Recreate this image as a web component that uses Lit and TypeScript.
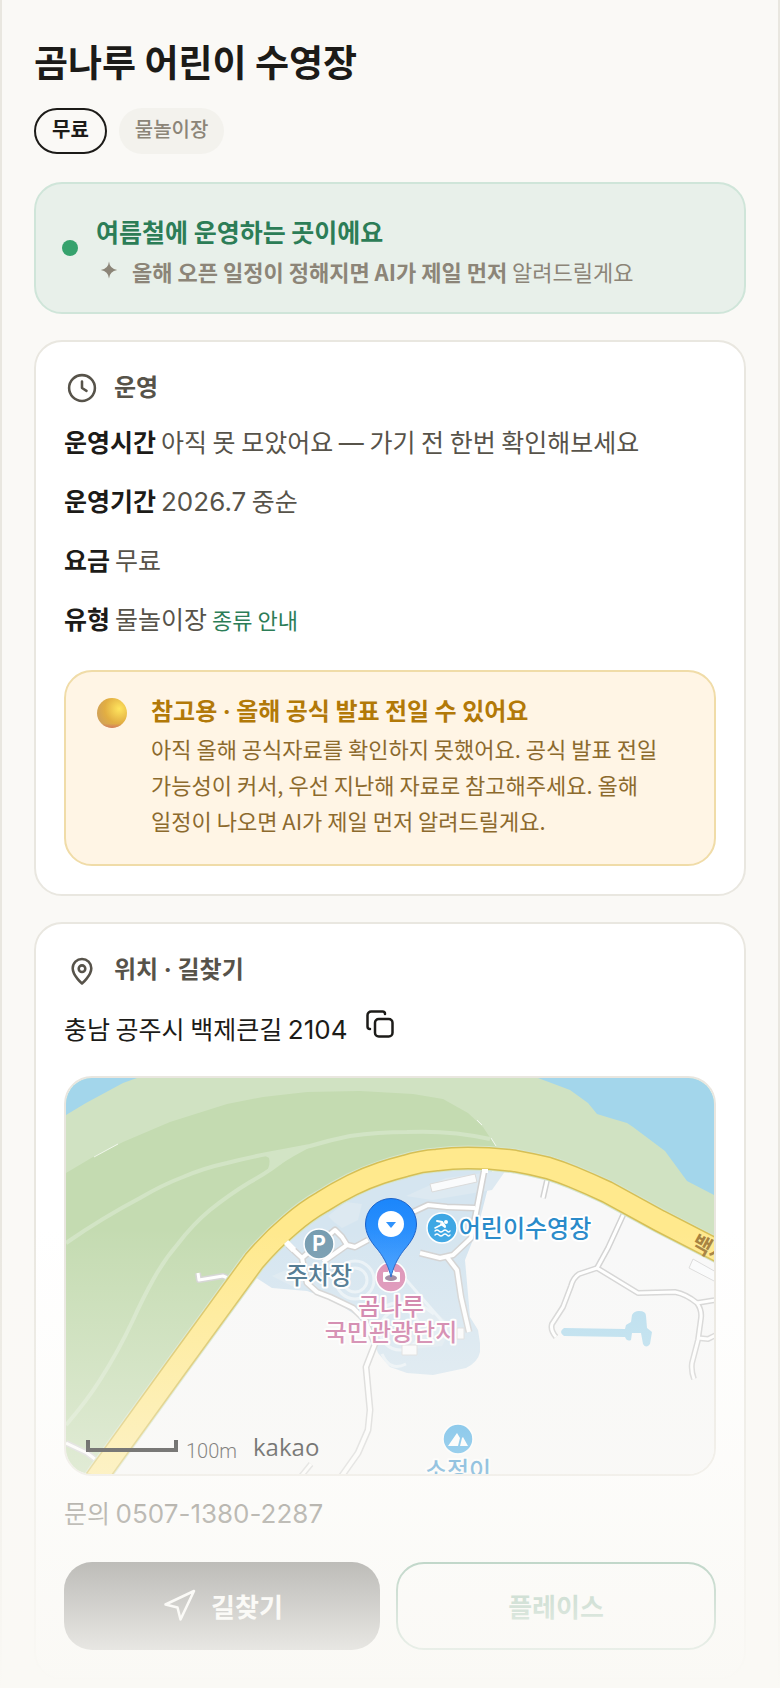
import { LitElement, html, css, svg } from "lit";
import { customElement } from "lit/decorators.js";

const outlineIcon = (body: unknown) => svg`
  <svg class="icon" viewBox="0 0 24 24" fill="none" stroke="currentColor" stroke-width="1.7"
    stroke-linecap="round" stroke-linejoin="round" aria-hidden="true">${body}</svg>`;

const clockIcon = outlineIcon(svg`<circle cx="12" cy="12" r="8.6"/><path d="M12 7.6V12l3 1.9"/>`);
const pinIcon = outlineIcon(svg`
  <path d="M12 21s-6.2-5.3-6.2-10.2a6.2 6.2 0 0 1 12.4 0C18.2 15.7 12 21 12 21z"/>
  <circle cx="12" cy="11.1" r="2.2"/>`);
const navigateIcon = outlineIcon(svg`<path d="M3 11 22 2l-9 19-2-8z"/>`);

@customElement("place-map")
class PlaceMap extends LitElement {
  static styles = css`
    :host {
      display: block;
      overflow: hidden;
      border: 2px solid #e9e6df;
      border-radius: 28px;
    }
    svg {
      display: block;
      width: 100%;
      height: auto;
    }
    .lane-edge,
    .lane {
      fill: none;
      stroke-linejoin: round;
    }
    .lane-edge {
      stroke: #d2d2d2;
      stroke-width: 7;
    }
    .lane {
      stroke: #fff;
      stroke-width: 4;
    }
    .thin .lane-edge {
      stroke-width: 6;
    }
    .thin .lane {
      stroke-width: 3;
    }
    .trail {
      fill: none;
      stroke: #d2e4c5;
      stroke-width: 4;
    }
    .label {
      font: 500 24px "Noto Sans CJK KR", sans-serif;
      text-anchor: middle;
      paint-order: stroke;
      stroke: #fff;
      stroke-width: 4px;
      stroke-linejoin: round;
    }
    .slate { fill: #45708a; }
    .blue { fill: #2a8bca; }
    .pink { fill: #cc74a2; }
    .road-name {
      font: 700 21px "Noto Sans CJK KR", sans-serif;
      fill: #a5803c;
    }
    .parking {
      font: 700 21px "Inter", sans-serif;
      fill: #fff;
      text-anchor: middle;
    }
    .scale {
      font: 300 20px "Roboto", sans-serif;
      fill: #111;
    }
    .brand {
      font: 500 24px "Open Sans", sans-serif;
      fill: #000;
    }
  `;

  private lanes(paths: string[]) {
    return svg`
      ${paths.map((d) => svg`<path class="lane-edge" d=${d}/>`)}
      ${paths.map((d) => svg`<path class="lane" d=${d}/>`)}`;
  }

  render() {
    const road =
      "M20 415L34 395L110 290L188 183Q205 163 224 147Q240 133 256 124Q270 115 286 107Q300 100 315 95Q327 91 339 88Q355 83 371 82Q386 80 402 80Q426 80 449 83Q466 86 482 90Q495 94 507 99Q524 106 541 114L594 143L670 182";
    return html`
      <svg viewBox="0 0 648 396" role="img" aria-label="곰나루 어린이 수영장 지도">
        <defs>
          <linearGradient id="marker" x1="0" y1="0" x2="0" y2="1">
            <stop offset="0" stop-color="#1b86fb"/>
            <stop offset="1" stop-color="#3d9bff"/>
          </linearGradient>
        </defs>
        <rect width="648" height="396" fill="#f8f8f8"/>
        <path fill="#d0e2c2" d="M0 0H648V172L594 143L541 114L507 99L482 90L449 83L402 80L371 82L339 88L315 95L286 107L256 124L224 147L188 183L110 290L34 396H0z"/>
        <path fill="#c4dbb1" d="M0 95L27 79L57 64L104 44L161 26L197 19L241 14L294 13L347 16L377 21L402 35L417 49L431 70V80L371 82L339 88L286 107L256 124L224 147L188 183L110 290L34 396H0z"/>
        <path fill="none" stroke="#fff" stroke-width="1" d="M28 79l24-13M411 42l5 5M425 60l5 8" opacity=".7"/>
        <path class="trail" d="M0 165Q36 140 74 120Q96 107 117 99Q138 90 161 85Q180 80 201 76Q222 72 244 68Q264 62 284 58Q312 54 341 54Q384 52 424 61"/>
        <path class="trail" d="M0 347Q20 324 34 302Q52 274 67 242Q77 220 87 202Q98 182 111 167Q127 146 144 132Q164 116 184 104Q206 92 222 78"/>
        <path fill="#d2e4c5" d="M196 76L250 66L228 78L200 95Q205 86 203 80z"/>
        <path fill="#a3d6eb" d="M0 0H71L57 5L20 25L0 37z"/>
        <path fill="#a3d6eb" d="M472 0L504 12L522 25L531 36L544 40L561 45L567 49L599 73L621 103L648 117V0z"/>

        <path fill="#d5e5f0" d="M189 199L206 210L241 213L267 222L297 242L309 267L312 275L324 289L341 295L367 297L400 290Q412 284 414 274V265L412 252L404 239L399 182L412 149L427 90L402 80L339 88L286 107L224 147z"/>
        <g fill="#dde9f1">
          <path d="M262 138l18-14 16 2-4 16-16 8-8-6zM340 118l40-18 60-8-14 20-60 10zM206 198l14-6 18 12-8 6zM356 222l30 26-10 20-40 4z"/>
        </g>
        <g fill="none" stroke="#eaf2f7" stroke-width="3">
          <circle cx="289" cy="202" r="19"/>
          <circle cx="289" cy="202" r="12"/>
          <circle cx="334" cy="252" r="20"/>
          <path d="M312 232q30-18 56 4M330 190l52 60M316 276q8 18 24 10"/>
        </g>
        <g fill="#fafbfc" stroke="#dadada">
          <path d="M364 106L409 96L411 104L366 114zM336 267h15v10h-15zM391 250h7v11h-7zM627 181L650 194V204L623 190z"/>
        </g>

        ${this.lanes([
          "M222 167L236 180L241 205L251 214L264 219L287 230L299 242L309 266L300 289L304 332L302 352L292 375L275 399",
          "M236 180L269 152L276 159L281 167L289 169L302 162",
          "M281 167L257 184",
          "M347 134L362 127L381 129L409 130",
          "M419 88L411 130L405 160L387 177L374 180L354 175",
          "M381 179L391 192L395 219L403 254",
        ])}
        <g class="thin">
          ${this.lanes([
            "M482 98L477 120",
            "M559 133L542 170L531 190L572 215L609 214Q620 216 631 225Q636 232 635 240L632 262L626 285Q625 293 628 301",
            "M531 190L513 196Q507 200 505 208L497 229L486 246Q484 252 490 259",
            "M631 225L650 222",
            "M632 260L642 261L650 257",
            "M132 195L133 202L157 198L164 201",
            "M0 365L21 375L34 385",
            "M245 386L232 402",
          ])}
        </g>

        <path fill="none" stroke="#d5e5cb" stroke-width="25" d=${road}/>
        <path fill="none" stroke="#d6bf55" stroke-width="23" d=${road}/>
        <path fill="none" stroke="#ffe98d" stroke-width="20" d=${road}/>
        <path fill="none" stroke="#fff" stroke-width="6" d="M220 164l8 8M419 91v4"/>
        <text class="road-name" transform="translate(624 169) rotate(29)">백제큰길</text>

        <path fill="#b4dcee" d="M498 250L559 251L560 247L565 244L566 237Q568 233 573 233Q580 233 580 238L581 250L586 254L584 266Q580 271 577 266L575 255L566 255L565 262Q561 264 559 259L498 258Q492 254 498 250z"/>

        <g stroke="#fff" stroke-width="1.5">
          <circle cx="253" cy="166" r="15" fill="#769cb0"/>
          <circle cx="376" cy="150" r="15" fill="#3ea7e4"/>
          <circle cx="325" cy="199" r="15" fill="#dc8fb5"/>
          <circle cx="392" cy="361" r="15" fill="#3ea7e4"/>
        </g>
        <text class="parking" x="253" y="173">P</text>
        <g fill="none" stroke="#fff" stroke-linecap="round">
          <path d="M371 143l5 1 3 4M375 146l4 3" stroke-width="2"/>
          <path d="M369 150l6-3" stroke-width="1.600"/>
          <path d="M369 153q2-2 4 0t4 0t4 0t3 0M369 157q2-2 4 0t4 0t4 0t3 0" stroke-width="1.400"/>
        </g>
        <circle cx="380" cy="144" r="2" fill="#fff"/>
        <path fill="#fff" d="M382 368L391 355L394 360L392 368zM394 368L396 360L397 359L402 368z"/>
        <path fill="#fff" d="M318 194h4l1-2h5l1 2h4q1 0 1 1v8q0 1-1 1h-15q-1 0-1-1v-8q0-1 1-1z"/>

        <text class="label slate" x="253" y="206">주차장</text>
        <text class="label blue" x="459" y="159">어린이수영장</text>
        <text class="label pink" x="325" y="237">곰나루</text>
        <text class="label pink" x="325" y="263">국민관광단지</text>
        <text class="label blue" x="392" y="401">소정이</text>

        <ellipse cx="325" cy="200" rx="6" ry="3" fill="#6d4a72" opacity=".7"/>
        <path fill="url(#marker)" stroke="#1c62c8" stroke-width="1"
          d="M325 199C323 190 319 181 312 172C304 163 299.500 155 299.500 146A25.500 25.500 0 0 1 350.500 146C350.500 155 346 163 338 172C331 181 327 190 325 199z"/>
        <circle cx="325" cy="146" r="13" fill="#fff"/>
        <path fill="#2f92fc" d="M320 144h10l-5 6z"/>

        <path fill="none" stroke="#000" stroke-width="4" d="M22 362V372H110V362"/>
        <text class="scale" x="120" y="380">100m</text>
        <text class="brand" x="187" y="378">kakao</text>
      </svg>
    `;
  }
}

@customElement("app-root")
class AppRoot extends LitElement {
  static styles = css`
    :host {
      display: block;
      font-family: "Noto Sans CJK KR", sans-serif;
      color: #1c1b18;
      word-break: keep-all;
    }
    .page {
      position: relative;
      box-sizing: border-box;
      min-height: 100vh;
      padding: 35px 32px 8px;
      border: solid #e9e7e0;
      border-width: 0 2px;
      background: #faf9f6;
    }
    .page::after {
      content: "";
      position: absolute;
      inset: auto -2px 0;
      height: 460px;
      background: linear-gradient(rgba(250, 249, 245, 0), #faf9f5);
      pointer-events: none;
    }
    h1,
    h2,
    p,
    dl,
    dd {
      margin: 0;
    }
    h1 {
      font-size: 37px;
      line-height: 52px;
      font-weight: 700;
    }
    .chips {
      display: flex;
      gap: 12px;
      margin: 21px 0 28px;
    }
    .chip {
      padding: 6px 16px 10px;
      border-radius: 23px;
      background: #f3f2ed;
      color: #8c8578;
      font-size: 20px;
      line-height: 30px;
      font-weight: 500;
    }
    .chip.selected {
      padding: 4px 16px 8px;
      border: 2px solid #1c1b18;
      background: none;
      color: #1c1b18;
      font-weight: 700;
    }
    .status {
      display: flex;
      align-items: center;
      gap: 18px;
      padding: 24px 26px;
      border: 2px solid #cfe5d9;
      border-radius: 28px;
      background: #e8f0ea;
    }
    .dot {
      flex: none;
      width: 16px;
      height: 16px;
      border-radius: 50%;
      background: #36a26d;
    }
    .status-title {
      color: #2c7d57;
      font-size: 25px;
      line-height: 46px;
      font-weight: 700;
    }
    .status-note {
      display: flex;
      gap: 12px;
      color: #8c8578;
      font-size: 22px;
      line-height: 34px;
    }
    .spark {
      flex: none;
      width: 24px;
      height: 28px;
      margin-top: 2px;
    }
    .card {
      margin-top: 26px;
      padding: 28px;
      border: 2px solid #e9e7e0;
      border-radius: 28px;
      background: #fff;
    }
    .heading {
      display: flex;
      align-items: center;
      gap: 14px;
      color: #57534a;
      font-family: "Inter", "Noto Sans CJK KR", sans-serif;
      font-size: 24px;
      line-height: 36px;
      font-weight: 700;
    }
    .icon {
      flex: none;
      width: 36px;
      height: 36px;
    }
    .facts {
      display: grid;
      gap: 19px;
      margin-top: 15px;
    }
    .fact {
      display: flex;
      align-items: baseline;
      gap: 5px;
      height: 40px;
      font-size: 25px;
      line-height: 40px;
    }
    .fact dt {
      font-weight: 700;
    }
    .fact dd,
    .contact {
      color: #57534a;
    }
    .latin {
      font-family: "Inter", sans-serif;
      line-height: 1;
    }
    .number {
      font-size: 26px;
    }
    .guide {
      color: #2c7d57;
      font-size: 22px;
      text-decoration: none;
    }
    .notice {
      display: flex;
      gap: 24px;
      margin-top: 32px;
      padding: 18px 31px 26px;
      border: 2px solid #f0dca8;
      border-radius: 28px;
      background: #fff5e5;
      color: #8c6a2d;
      font-size: 22px;
      line-height: 36px;
    }
    .bead {
      flex: none;
      width: 30px;
      height: 30px;
      margin-top: 8px;
    }
    .notice-title {
      color: #b27908;
      font-size: 24px;
      line-height: 40px;
      font-weight: 700;
    }
    .address {
      display: flex;
      align-items: center;
      gap: 18px;
      margin-top: 20px;
      font-size: 25px;
      line-height: 40px;
    }
    .copy {
      display: flex;
      padding: 0 0 8px;
      border: 0;
      background: none;
      color: inherit;
    }
    .copy svg {
      width: 30px;
      height: 30px;
    }
    place-map {
      margin-top: 28px;
    }
    .contact {
      margin-top: 16px;
      font-size: 25px;
      line-height: 40px;
    }
    .contact a {
      color: inherit;
      text-decoration: none;
    }
    .actions {
      display: flex;
      gap: 16px;
      margin-top: 30px;
    }
    .action {
      flex: 1;
      display: flex;
      align-items: center;
      justify-content: center;
      gap: 14px;
      min-height: 88px;
      border-radius: 28px;
      background: #1c1b18;
      color: #fff;
      font-size: 26px;
      line-height: 36px;
      font-weight: 700;
      text-decoration: none;
    }
    .action.outline {
      min-height: 84px;
      border: 2px solid #2c7d57;
      background: #fff;
      color: #2c7d57;
    }
  `;

  private fact(term: string, value: unknown, extra: unknown = "") {
    return html`<div class="fact"><dt>${term}</dt><dd>${value}</dd>${extra}</div>`;
  }

  render() {
    return html`
      <main class="page">
        <h1>곰나루 어린이 수영장</h1>
        <div class="chips">
          <span class="chip selected">무료</span>
          <span class="chip">물놀이장</span>
        </div>

        <section class="status">
          <span class="dot"></span>
          <div>
            <p class="status-title">여름철에 운영하는 곳이에요</p>
            <p class="status-note">
              <svg class="spark" viewBox="0 0 24 28" aria-hidden="true">
                <path fill="currentColor" d="M13 5.500q.8 7.500 8.200 8.500q-7.400 1-8.200 8.500q-.8-7.500-8.200-8.500q7.400-1 8.200-8.500z"/>
              </svg>
              <span><b>올해 오픈 일정이 정해지면 AI가 제일 먼저</b> 알려드릴게요</span>
            </p>
          </div>
        </section>

        <section class="card">
          <h2 class="heading">${clockIcon}운영</h2>
          <dl class="facts">
            ${this.fact("운영시간", html`아직 못 모았어요 <span class="latin">—</span> 가기 전 한번 확인해보세요`)}
            ${this.fact("운영기간", html`<span class="latin number">2026.7</span> 중순`)}
            ${this.fact("요금", "무료")}
            ${this.fact("유형", "물놀이장", html`<dd><a class="guide" href="#types">종류 안내</a></dd>`)}
          </dl>
          <div class="notice">
            <svg class="bead" viewBox="0 0 30 30" aria-hidden="true">
              <defs>
                <radialGradient id="gold" cx=".74" cy=".36" r=".8">
                  <stop offset="0" stop-color="#ffe55e"/>
                  <stop offset=".6" stop-color="#e2ae42"/>
                  <stop offset="1" stop-color="#cfa05a"/>
                </radialGradient>
                <linearGradient id="rim" x1="0" y1="0" x2="0" y2="1">
                  <stop offset=".85" stop-color="#d5705f" stop-opacity="0"/>
                  <stop offset="1" stop-color="#d5705f" stop-opacity=".8"/>
                </linearGradient>
              </defs>
              <circle cx="15" cy="15" r="15" fill="url(#gold)"/>
              <circle cx="15" cy="15" r="15" fill="url(#rim)"/>
            </svg>
            <div>
              <p class="notice-title">참고용 <span class="latin">·</span> 올해 공식 발표 전일 수 있어요</p>
              <p>아직 올해 공식자료를 확인하지 못했어요. 공식 발표 전일 가능성이 커서, 우선 지난해 자료로 참고해주세요. 올해 일정이 나오면 AI가 제일 먼저 알려드릴게요.</p>
            </div>
          </div>
        </section>

        <section class="card">
          <h2 class="heading">${pinIcon}위치 · 길찾기</h2>
          <div class="address">
            <span>충남 공주시 백제큰길 <span class="latin number">2104</span></span>
            <button class="copy" type="button" aria-label="주소 복사">
              <svg viewBox="0 0 24 24" fill="none" stroke="currentColor" stroke-width="2"
                stroke-linecap="round" stroke-linejoin="round" aria-hidden="true">
                <rect x="8" y="8" width="14" height="14" rx="3"/>
                <path d="M4 16c-1.100 0-2-.9-2-2V5c0-1.700 1.300-3 3-3h9c1.100 0 2 .9 2 2"/>
              </svg>
            </button>
          </div>
          <place-map></place-map>
          <p class="contact">문의 <a class="latin number" href="tel:0507-1380-2287">0507-1380-2287</a></p>
          <div class="actions">
            <a class="action" href="#route">${navigateIcon}길찾기</a>
            <a class="action outline" href="#place">플레이스</a>
          </div>
        </section>
      </main>
    `;
  }
}
